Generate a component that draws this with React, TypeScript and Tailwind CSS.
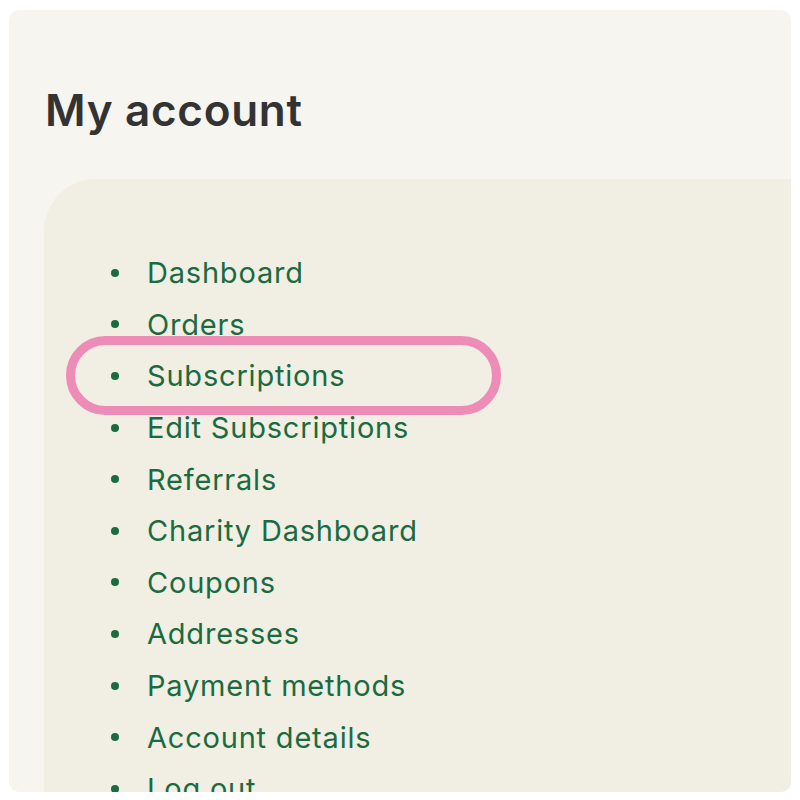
import React from 'react';

const items = [
  'Dashboard',
  'Orders',
  'Subscriptions',
  'Edit Subscriptions',
  'Referrals',
  'Charity Dashboard',
  'Coupons',
  'Addresses',
  'Payment methods',
  'Account details',
  'Log out',
];

const App: React.FC = () => {
  return (
    <div className="w-[800px] h-[800px] bg-white pt-[10px] pl-[9px] pr-[9px] font-['Inter','Liberation_Sans',sans-serif]">
      <div className="h-[782px] rounded-[10px] bg-[#f7f5f0] overflow-hidden">
        <h1 className="pt-[74px] pl-[36px] text-[44px] leading-[53px] font-semibold text-[#333333] tracking-[0.7px]">
          My account
        </h1>

        {/* account nav panel */}
        <div className="mt-[42px] ml-[35px] h-[700px] rounded-tl-[52px] bg-[#f1eee3] pt-[68px]">
          <ul className="flex flex-col">
            {items.map((label) => (
              <li key={label} className="relative flex items-center h-[51.6px] pl-[67px]">
                {label === 'Subscriptions' && (
                  <span className="absolute left-[22px] top-[-14px] w-[435px] h-[79px] rounded-full border-[9px] border-[#ee8cb8]" />
                )}
                <span className="w-[8px] h-[8px] rounded-full bg-[#1b6b41]" />
                <a className="ml-[28px] text-[29px] leading-none text-[#1b6b41] tracking-[0.8px]">{label}</a>
              </li>
            ))}
          </ul>
        </div>
      </div>
    </div>
  );
};

export default App;
